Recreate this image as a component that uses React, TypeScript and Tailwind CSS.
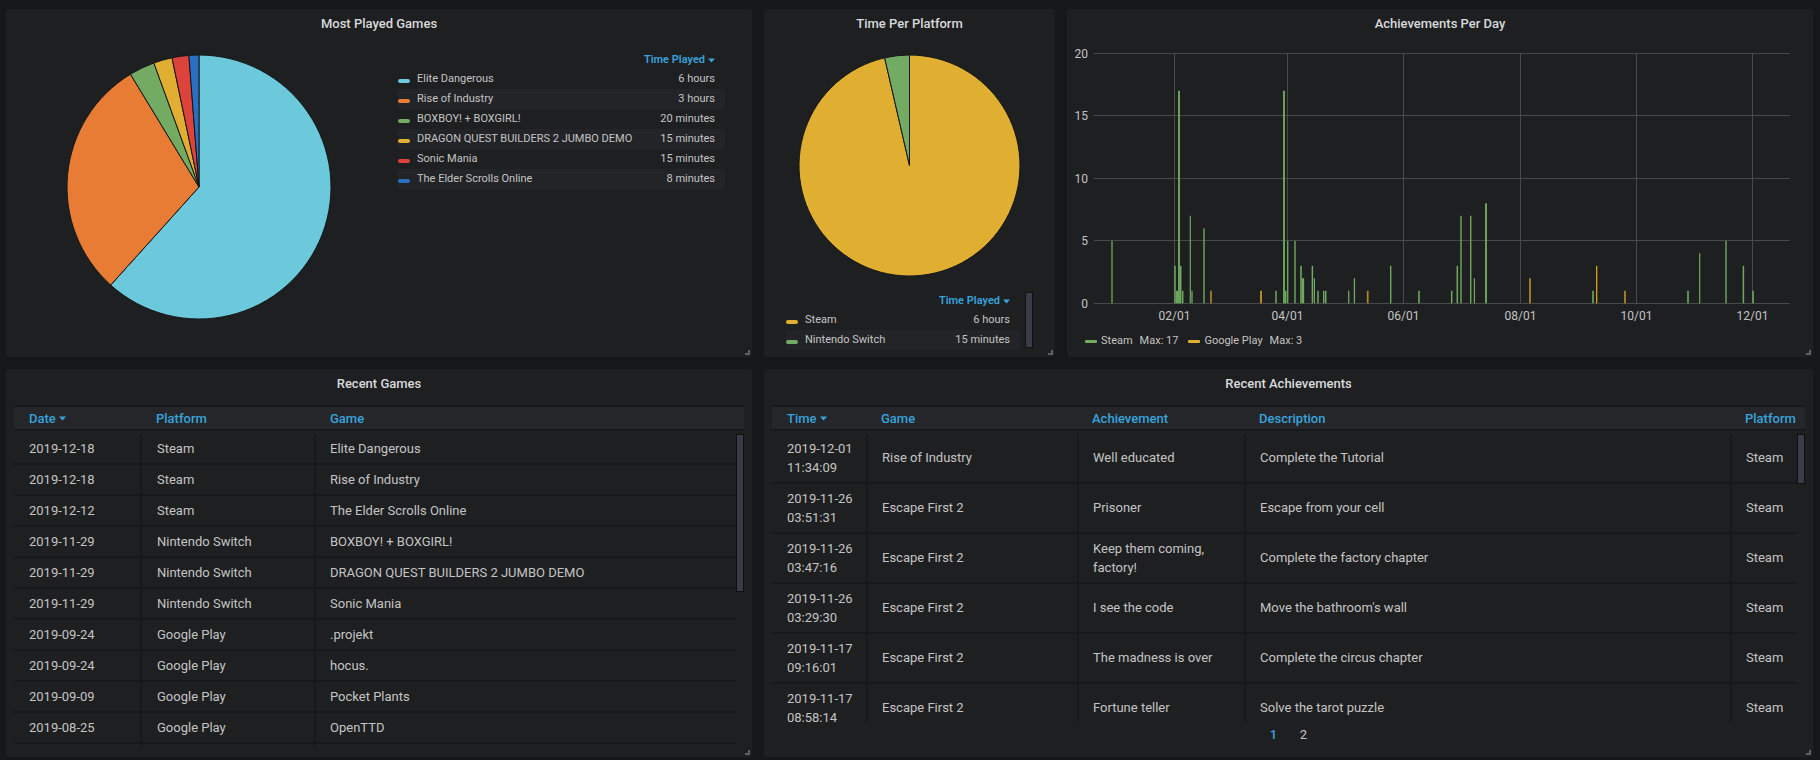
import React from "react";

function Caret() {
  return (
    <svg width="7" height="5" viewBox="0 0 7 5" className="ml-[3px] inline-block shrink-0">
      <polygon points="0,0.5 7,0.5 3.5,4.6" fill="#38a3dc" />
    </svg>
  );
}

function ResizeHandle() {
  return (
    <svg width="5" height="5" viewBox="0 0 5 5" className="absolute right-[2px] bottom-[2px]">
      <path d="M0 3H3V0H5V5H0Z" fill="#5f6063" />
    </svg>
  );
}

type Slice = { end: number; color: string };

function Pie({ r, slices }: { r: number; slices: Slice[] }) {
  const size = r * 2 + 2;
  const c = size / 2;
  const pt = (a: number) => {
    const t = (a * Math.PI) / 180;
    return `${c + r * Math.sin(t)} ${c - r * Math.cos(t)}`;
  };
  let start = 0;
  return (
    <svg width={size} height={size} viewBox={`0 0 ${size} ${size}`} className="shrink-0 block">
      {slices.map((s, i) => {
        const d = `M${c} ${c}L${pt(start)}A${r} ${r} 0 ${s.end - start > 180 ? 1 : 0} 1 ${pt(s.end)}Z`;
        start = s.end;
        return <path key={i} d={d} fill={s.color} stroke="#15161a" strokeWidth="1" />;
      })}
    </svg>
  );
}

function Legend({ rows, className }: { rows: [string, string, string][]; className: string }) {
  return (
    <div className={`text-[11px] text-[#c4c4c4] ${className}`}>
      <div className="flex h-[20px] items-center justify-end pt-[2px] pr-[10px] font-semibold text-[#38a3dc]">
        Time Played
        <Caret />
      </div>
      {rows.map(([color, name, value], i) => (
        <div key={name} className={`flex h-[20px] items-center ${i % 2 === 1 ? "bg-[#232427]" : ""}`}>
          <span className="mt-[3px] h-[4px] w-[12px] shrink-0 rounded-[2px]" style={{ background: color }} />
          <span className="ml-[7px] flex-1 whitespace-nowrap">{name}</span>
          <span className="pr-[10px] whitespace-nowrap">{value}</span>
        </div>
      ))}
    </div>
  );
}

function Panel({ title, className, children }: { title: string; className: string; children: React.ReactNode }) {
  return (
    <div className={`relative shrink-0 rounded-[3px] bg-[#1e1f21] ${className}`}>
      <div className="flex h-[28px] items-center justify-center pt-[1px] text-[13px] font-medium text-[#d8d9da]">{title}</div>
      {children}
      <ResizeHandle />
    </div>
  );
}

const GREEN = "#6fa85e";
const GOLD = "#dfa92b";
const bars: [number, number, string, number][] = [
  [1112, 5, GREEN, 1.3], [1175, 3, GREEN, 1.5], [1176.7, 1, GREEN, 1.3], [1177.4, 1, GREEN, 1.3], [1179, 17, GREEN, 1.9],
  [1180.7, 3, GREEN, 1.5], [1182.7, 1, GREEN, 1.5], [1190.3, 7, GREEN, 1.2], [1192, 1, GREEN, 1.3], [1204, 6, GREEN, 1.4],
  [1211, 1, GOLD, 1.2], [1261, 1, "#b28a2c", 2], [1276, 1, GREEN, 1.5], [1284, 17, GREEN, 1.9], [1285.7, 1, GREEN, 1.5],
  [1287.7, 5, GREEN, 1.3], [1295, 5, GREEN, 1.4], [1301, 3, GREEN, 1.6], [1302.7, 2, GREEN, 1.5], [1303.4, 2, GREEN, 1.5],
  [1312.4, 3, GREEN, 1.5], [1314.4, 2, GREEN, 1.2], [1318, 1, GREEN, 1.5], [1323.7, 1, GREEN, 1.4], [1325.7, 1, GREEN, 1.5],
  [1348.7, 1, GREEN, 1.3], [1354.4, 2, GREEN, 1.3], [1367.7, 1, "#b28a2c", 1.7], [1390.7, 3, GREEN, 1.4], [1419, 1, GREEN, 1.6],
  [1451.7, 1, GREEN, 1.5], [1457.3, 3, GREEN, 1.5], [1461, 7, GREEN, 1.4], [1470.7, 7, GREEN, 1.4], [1474.4, 2, GREEN, 1.2],
  [1486, 8, GREEN, 1.9], [1530, 2, "#b28a2c", 1.7], [1593, 1, GREEN, 1.6], [1596.7, 3, "#e8ab1e", 1.2], [1625, 1, "#b28a2c", 1.7],
  [1688, 1, GREEN, 1.6], [1699.7, 4, GREEN, 1.2], [1726, 5, GREEN, 1.4], [1743.4, 3, GREEN, 1.5], [1753, 1, GREEN, 1.6],
];

function Chart() {
  const ox = 1067;
  const oy = 37;
  const ys = [
    [20, 53.5], [15, 115.5], [10, 178.5], [5, 240.5], [0, 303.5],
  ];
  const xs = [
    ["02/01", 1174.5], ["04/01", 1287.5], ["06/01", 1403.5], ["08/01", 1520.5], ["10/01", 1636.5], ["12/01", 1752.5],
  ] as [string, number][];
  return (
    <svg width="746" height="289" viewBox="0 0 746 289" className="block">
      {ys.map(([v, y]) => (
        <g key={v}>
          <line x1={1094 - ox} x2={1790 - ox} y1={y - oy} y2={y - oy} stroke="#48494b" />
          <text x={1088 - ox} y={y - oy + 4} textAnchor="end" fontSize="12" fill="#c4c4c4">{v}</text>
        </g>
      ))}
      {xs.map(([l, x]) => (
        <g key={l}>
          <line x1={x - ox} x2={x - ox} y1={53 - oy} y2={303 - oy} stroke="#48494b" />
          <text x={x - ox} y={320 - oy} textAnchor="middle" fontSize="12" fill="#c4c4c4">{l}</text>
        </g>
      ))}
      {bars.map(([x, v, c, w], i) => (
        <rect key={i} x={x - ox - w / 2} y={303.3 - v * 12.5 - oy} width={w} height={v * 12.5} fill={c} />
      ))}
    </svg>
  );
}

function Scroll({ h }: { h: string }) {
  return <div className={`absolute top-0 right-0 w-[8px] border border-[#0e0f11] bg-[#3a3b47] ${h}`} />;
}

function HeaderCell({ w, children, sorted }: { w: string; children: string; sorted?: boolean }) {
  return (
    <div className={`flex items-center pl-[15px] ${w}`}>
      {children}
      {sorted && <Caret />}
    </div>
  );
}

const games = [
  ["2019-12-18", "Steam", "Elite Dangerous"],
  ["2019-12-18", "Steam", "Rise of Industry"],
  ["2019-12-12", "Steam", "The Elder Scrolls Online"],
  ["2019-11-29", "Nintendo Switch", "BOXBOY! + BOXGIRL!"],
  ["2019-11-29", "Nintendo Switch", "DRAGON QUEST BUILDERS 2 JUMBO DEMO"],
  ["2019-11-29", "Nintendo Switch", "Sonic Mania"],
  ["2019-09-24", "Google Play", ".projekt"],
  ["2019-09-24", "Google Play", "hocus."],
  ["2019-09-09", "Google Play", "Pocket Plants"],
  ["2019-08-25", "Google Play", "OpenTTD"],
  ["", "", ""],
];

const achievements = [
  ["2019-12-01", "11:34:09", "Rise of Industry", "Well educated", "Complete the Tutorial"],
  ["2019-11-26", "03:51:31", "Escape First 2", "Prisoner", "Escape from your cell"],
  ["2019-11-26", "03:47:16", "Escape First 2", "Keep them coming, factory!", "Complete the factory chapter"],
  ["2019-11-26", "03:29:30", "Escape First 2", "I see the code", "Move the bathroom's wall"],
  ["2019-11-17", "09:16:01", "Escape First 2", "The madness is over", "Complete the circus chapter"],
  ["2019-11-17", "08:58:14", "Escape First 2", "Fortune teller", "Solve the tarot puzzle"],
];

function TableHead({ children, className }: { children: React.ReactNode; className: string }) {
  return (
    <div className={`mt-[8px] flex h-[26px] border-y-2 border-[#17181a] bg-[#252629] pt-[1px] text-[13px] font-medium text-[#38a3dc] ${className}`}>
      {children}
    </div>
  );
}

function GamesTable() {
  return (
    <>
      <TableHead className="mx-[8px]">
        <HeaderCell w="w-[127px]" sorted>Date</HeaderCell>
        <HeaderCell w="w-[174px]">Platform</HeaderCell>
        <HeaderCell w="flex-1">Game</HeaderCell>
      </TableHead>
      <div className="relative mx-[8px] mt-[3px] h-[313px] overflow-hidden text-[13px] text-[#c4c4c4]">
        {games.map((g, i) => (
          <div key={i} className="flex h-[31px] w-[722px] border-b-2 border-[#17181a]">
            <div className="flex w-[128px] items-center border-r-2 border-[#17181a] pl-[15px]">{g[0]}</div>
            <div className="flex w-[174px] items-center border-r-2 border-[#17181a] pl-[15px]">{g[1]}</div>
            <div className="flex flex-1 items-center pl-[14px]">{g[2]}</div>
          </div>
        ))}
        <Scroll h="h-[158px]" />
      </div>
    </>
  );
}

function AchievementsTable() {
  return (
    <>
      <TableHead className="mx-[8px]">
        <HeaderCell w="w-[94px]" sorted>Time</HeaderCell>
        <HeaderCell w="w-[211px]">Game</HeaderCell>
        <HeaderCell w="w-[167px]">Achievement</HeaderCell>
        <HeaderCell w="w-[486px]">Description</HeaderCell>
        <HeaderCell w="flex-1">Platform</HeaderCell>
      </TableHead>
      <div className="relative mx-[8px] mt-[3px] h-[288px] overflow-hidden text-[13px] leading-[19px] text-[#c4c4c4]">
        {achievements.map((a, i) => (
          <div key={i} className="flex h-[50px] w-[1025px] border-b-2 border-[#17181a]">
            <div className="flex w-[96px] items-center border-r-2 border-[#17181a] pl-[15px]">
              <span>{a[0]}<br />{a[1]}</span>
            </div>
            <div className="flex w-[211px] items-center border-r-2 border-[#17181a] pb-[1px] pl-[14px]">{a[2]}</div>
            <div className="flex w-[167px] items-center border-r-2 border-[#17181a] pb-[1px] pl-[14px]">{a[3]}</div>
            <div className="flex w-[486px] items-center border-r-2 border-[#17181a] pb-[1px] pl-[14px]">{a[4]}</div>
            <div className="flex flex-1 items-center pb-[1px] pl-[14px]">Steam</div>
          </div>
        ))}
        <Scroll h="h-[50px]" />
      </div>
      <div className="flex h-[26px] items-center justify-center text-[13px] text-[#c4c4c4]">
        <span className="w-[30px] text-center font-medium text-[#38a3dc]">1</span>
        <span className="w-[30px] text-center">2</span>
      </div>
    </>
  );
}

export default function App() {
  return (
    <div className="flex h-[760px] w-[1820px] flex-col gap-[12px] overflow-hidden bg-[#161719] pt-[9px] pl-[6px] [font-family:Roboto,sans-serif]">
      <div className="flex h-[348px] shrink-0 gap-[12px]">
        <Panel title="Most Played Games" className="flex w-[746px] flex-col">
          <div className="flex items-start">
            <div className="mt-[17px] ml-[60px]">
              <Pie
                r={132}
                slices={[
                  { end: 222, color: "#6bc9db" },
                  { end: 328.7, color: "#e97c35" },
                  { end: 340, color: "#73ab62" },
                  { end: 348.2, color: "#e0ae31" },
                  { end: 355.6, color: "#dd433a" },
                  { end: 360, color: "#2b6fc0" },
                ]}
              />
            </div>
            <Legend
              className="mt-[12px] ml-[66px] w-[327px]"
              rows={[
                ["#6bc9db", "Elite Dangerous", "6 hours"],
                ["#e97c35", "Rise of Industry", "3 hours"],
                ["#73ab62", "BOXBOY! + BOXGIRL!", "20 minutes"],
                ["#e0ae31", "DRAGON QUEST BUILDERS 2 JUMBO DEMO", "15 minutes"],
                ["#dd433a", "Sonic Mania", "15 minutes"],
                ["#2b6fc0", "The Elder Scrolls Online", "8 minutes"],
              ]}
            />
          </div>
        </Panel>
        <Panel title="Time Per Platform" className="w-[291px]">
          <div className="mt-[17px] ml-[34px]">
            <Pie
              r={110.5}
              slices={[
                { end: 347, color: "#e0ae31" },
                { end: 360, color: "#73ab62" },
              ]}
            />
          </div>
          <div className="mt-[13px] flex items-start pl-[22px]">
            <Legend
              className="w-[234px]"
              rows={[
                ["#e0ae31", "Steam", "6 hours"],
                ["#73ab62", "Nintendo Switch", "15 minutes"],
              ]}
            />
            <div className="mt-[2px] ml-[5px] h-[56px] w-[8px] border border-[#0e0f11] bg-[#3a3b47]" />
          </div>
        </Panel>
        <Panel title="Achievements Per Day" className="w-[746px]">
          <Chart />
          <div className="flex h-[28px] items-center pt-[2px] pl-[18px] text-[11px] text-[#c4c4c4]">
            <span className="h-[3px] w-[12px] rounded-[1px] bg-[#73ab62]" />
            <span className="ml-[4px]">Steam</span>
            <span className="ml-[7px]">Max: 17</span>
            <span className="ml-[10px] h-[3px] w-[12px] rounded-[1px] bg-[#e0ae31]" />
            <span className="ml-[4px]">Google Play</span>
            <span className="ml-[7px]">Max: 3</span>
          </div>
        </Panel>
      </div>
      <div className="flex h-[388px] shrink-0 gap-[12px]">
        <Panel title="Recent Games" className="w-[746px]">
          <GamesTable />
        </Panel>
        <Panel title="Recent Achievements" className="w-[1049px]">
          <AchievementsTable />
        </Panel>
      </div>
    </div>
  );
}
